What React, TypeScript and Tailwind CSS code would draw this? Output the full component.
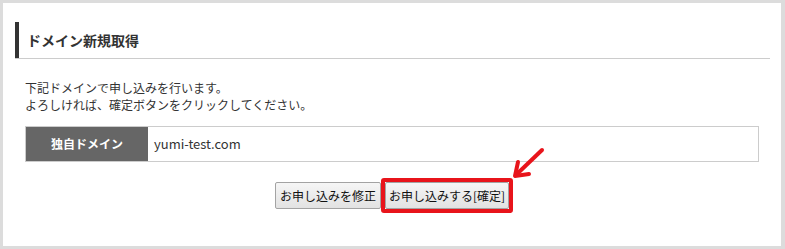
const font = { fontFamily: '"Noto Sans CJK JP", "Noto Sans", sans-serif' };

function ConfirmArrow() {
	return (
		<svg
			className="pointer-events-none absolute left-[510px] top-[146px]"
			width="40"
			height="36"
			viewBox="510 146 40 36"
		>
			<line x1="542" y1="150" x2="518" y2="173" stroke="#e8141b" strokeWidth="4" strokeLinecap="round" />
			<polyline
				points="518,162 515,176 529,174"
				fill="none"
				stroke="#e8141b"
				strokeWidth="4"
				strokeLinecap="round"
				strokeLinejoin="round"
			/>
		</svg>
	);
}

function Btn({ children, className = "" }: { children: React.ReactNode; className?: string }) {
	return (
		<button
			type="button"
			className={`flex h-[27px] items-center justify-center rounded-[2px] border border-[#a3a3a3] bg-gradient-to-b from-[#f6f6f6] to-[#e2e2e2] text-[12px] leading-none text-[#111] ${className}`}
		>
			{children}
		</button>
	);
}

export default function App() {
	return (
		<div className="relative h-[249px] w-[785px] bg-[#dcdcdc] pb-[3px] pl-[3px] pr-[4px] pt-[3px]" style={font}>
			<div className="h-full bg-white pl-[12px] pr-[11px] pt-[19px]">
				<div className="h-[37px] border-b border-[#cccccc]">
					<div className="flex h-[36px] items-center border-l-4 border-[#333333] pl-[8px] text-[14px] font-bold text-[#333333]">
						ドメイン新規取得
					</div>
				</div>

				<div className="pl-[10px] pr-[11px]">
					<div className="mt-[20px] text-[12px] leading-[17px] text-[#333333]">
						<div>下記ドメインで申し込みを行います。</div>
						<div>よろしければ、確定ボタンをクリックしてください。</div>
					</div>

					<div className="mt-[13px] flex h-[36px] border border-[#cccccc]">
						<div className="flex w-[122px] items-center justify-center bg-[#666666] text-[12px] font-bold text-white">
							独自ドメイン
						</div>
						<div className="flex flex-1 items-center pl-[6px] text-[13px] text-[#333333]">yumi-test.com</div>
					</div>

					<div className="mt-[16px] flex justify-center pl-[4px]">
						<div className="mt-[4px]">
							<Btn className="w-[106px]">お申し込みを修正</Btn>
						</div>
						<div className="rounded-[3px] border-4 border-[#e8141b]">
							<Btn className="w-[124px]">お申し込みする[確定]</Btn>
						</div>
					</div>
				</div>
			</div>
			<ConfirmArrow />
		</div>
	);
}
